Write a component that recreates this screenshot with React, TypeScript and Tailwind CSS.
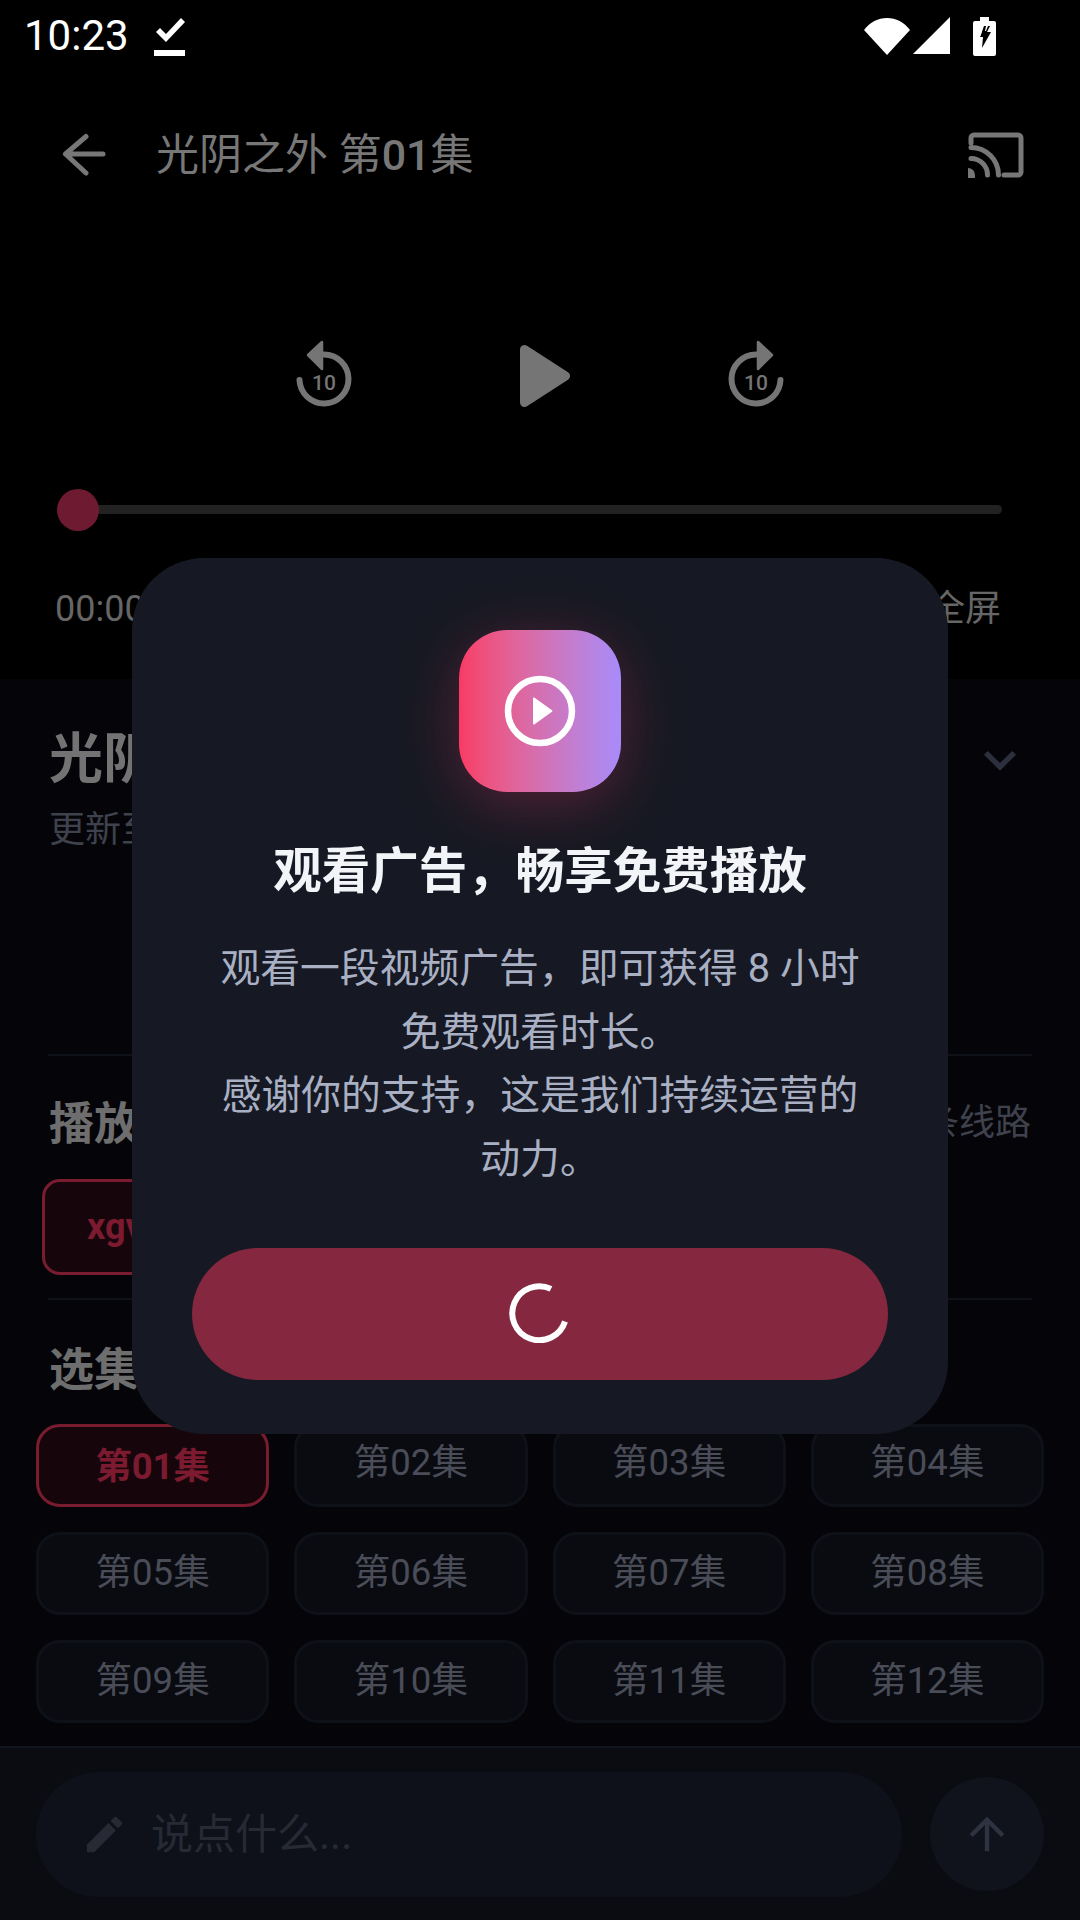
import { MdArrowUpward, MdEdit, MdKeyboardArrowDown } from "react-icons/md";

const episodes = ["第01集", "第02集", "第03集", "第04集", "第05集", "第06集", "第07集", "第08集", "第09集", "第10集", "第11集", "第12集"];

const StatusBar = () => (
  <div className="flex h-[72px] items-center pl-[24px] text-white">
    <span className="text-[42px] leading-[72px]">10:23</span>
    <svg className="ml-[25px]" width="32" height="40" viewBox="0 0 32 40" fill="white">
      <path d="M0 34h31v6H0zM2 16l4-4 6 6L27 2l4 4-19 20z" />
    </svg>
    <div className="flex-1" />
    <svg width="46" height="37" viewBox="0 0 46 37" fill="white">
      <path d="M0 12C6 4 14 0 23 0s17 4 23 12L23 37z" />
    </svg>
    <svg className="ml-[3px]" width="38" height="38" viewBox="0 0 38 38" fill="white">
      <path d="M37 0v37H0z" />
    </svg>
    <svg className="ml-[22px] mr-[84px]" width="23" height="39" viewBox="0 0 23 39">
      <path fill="white" d="M7 0h9v4h5a2 2 0 0 1 2 2v31a2 2 0 0 1-2 2H2a2 2 0 0 1-2-2V6a2 2 0 0 1 2-2h5z" />
      <path fill="black" d="M4 9h7l-4 11h3l-1 11 9-16h-4l3-6h1v0H4z" />
      <path fill="white" d="M6.500 12h3l-2 7H6.500zM13 9h2l-2 5h-1z" />
    </svg>
  </div>
);

const SeekIcon = ({ flip }: { flip?: boolean }) => (
  <svg width="56" height="68" viewBox="0 0 56 68" fill="none">
    <g transform={flip ? "translate(56 0) scale(-1 1)" : undefined}>
      <path d="M28 14.500A24.500 24.500 0 1 1 3.500 40" stroke="#757575" strokeWidth="6" strokeLinecap="round" />
      <path d="M26 2v27L12 15z" fill="#757575" stroke="#757575" strokeWidth="2.500" strokeLinejoin="round" />
    </g>
    <text x="28" y="50" textAnchor="middle" fontSize="21" fontWeight="500" fill="#757575">10</text>
  </svg>
);

const Episode = ({ label, active, firstRow }: { label: string; active: boolean; firstRow: boolean }) => {
  if (active) {
    return (
      <div className="flex h-[83px] items-center justify-center rounded-[24px] border-[3px] border-[#7a1c30] bg-[#16060c] pt-[4px] text-[36.500px] font-bold text-[#7c1a30]">
        {label}
      </div>
    );
  }
  return (
    <div
      className={
        firstRow
          ? "flex h-[83px] items-center justify-center rounded-[24px] border-[3px] border-[#0f1119] bg-[#090b10] pb-[5px] text-[36.500px] text-[#4a4d58]"
          : "flex h-[83px] items-center justify-center rounded-[24px] border-[3px] border-[#0f1119] bg-[#090b10] text-[36.500px] text-[#4a4d58]"
      }
    >
      {label}
    </div>
  );
};

const AdDialog = () => (
  <div className="absolute left-[132px] top-[558px] flex h-[876px] w-[816px] flex-col items-center rounded-[72px] bg-[#161923] px-[60px] pt-[72px]">
    <div className="flex h-[162px] w-[162px] items-center justify-center rounded-[48px] bg-gradient-to-r from-[#f83a64] to-[#a78bfa] shadow-[0_12px_60px_rgba(248,58,100,0.28)]">
      <svg width="72" height="72" viewBox="0 0 72 72" fill="none">
        <circle cx="36" cy="36" r="32" stroke="white" strokeWidth="6.500" />
        <path d="M29 23.500v25a1 1 0 0 0 1.600.8L48 36.800a1 1 0 0 0 0-1.600L30.600 22.700a1 1 0 0 0-1.600.8z" fill="white" />
      </svg>
    </div>
    <h2 className="mt-[50px] text-[48.500px] font-bold leading-[60px] text-[#f3f4f8]">观看广告，畅享免费播放</h2>
    <p className="mt-[35px] w-[664px] text-center text-[39.800px] leading-[63.500px] text-[#a9b0c4]">
      观看一段视频广告，即可获得 8 小时免费观看时长。
      <br />
      感谢你的支持，这是我们持续运营的动力。
    </p>
    <div className="mt-auto mb-[54px] flex h-[132px] w-[696px] items-center justify-center rounded-full bg-[#84273f]">
      <svg className="mb-[2px] ml-[-2px]" width="60" height="60" viewBox="0 0 60 60" fill="none">
        <path d="M42 5.900A27 27 0 1 0 56 38.500" stroke="white" strokeWidth="6" />
      </svg>
    </div>
  </div>
);

export default function App() {
  return (
    <div lang="zh-CN" className="relative flex h-[1920px] w-[1080px] flex-col overflow-hidden bg-black [font-family:Roboto,'Noto_Sans_CJK_SC',sans-serif]">
      <div className="h-[679px] shrink-0 bg-black">
        <StatusBar />
        <div className="flex h-[166px] items-center pl-[62px] pr-[56px] text-[#777777]">
          <svg className="shrink-0" width="46" height="46" viewBox="0 0 46 46" fill="none" stroke="#777777" strokeWidth="5" strokeLinecap="round" strokeLinejoin="round">
            <path d="M24 4.500 3.500 22 24 41M3.500 22H41" />
          </svg>
          <div className="ml-[48px] text-[43px] leading-[60px]">
            光阴之外 第<span className="font-medium">01</span>集
          </div>
          <div className="flex-1" />
          <svg width="56" height="46" viewBox="0 0 56 46" fill="none" stroke="#777777" strokeWidth="5" strokeLinecap="round">
            <path d="M3 11V6a3 3 0 0 1 3-3h44a3 3 0 0 1 3 3v34a3 3 0 0 1-3 3H36" />
            <path d="M3 15.500A27.500 27.500 0 0 1 30.500 43M3 26.500A16.500 16.500 0 0 1 19.500 43" />
            <path d="M0 36a7 7 0 0 1 7 7v3H0z" fill="#777777" stroke="none" />
          </svg>
        </div>
        <div className="flex h-[276px] items-center">
          <div className="mb-[4px] ml-[296px]">
            <SeekIcon />
          </div>
          <svg className="ml-[167px]" width="52" height="64" viewBox="0 0 52 64" fill="#757575">
            <path d="M1 5.500v53a4.500 4.500 0 0 0 7 3.800l41-26.500a4.500 4.500 0 0 0 0-7.600L8 1.700A4.500 4.500 0 0 0 1 5.500z" />
          </svg>
          <div className="mb-[4px] ml-[157px]">
            <SeekIcon flip />
          </div>
        </div>
        <div className="relative mx-[57px] mt-[-25px] h-[42px] w-[945px]">
          <div className="absolute left-0 right-0 top-[16px] h-[9px] rounded-full bg-[#222222]" />
          <div className="absolute left-0 top-0 h-[42px] w-[42px] rounded-full bg-[#6e1a30]" />
        </div>
        <div className="mt-[57px] flex h-[42px] items-center justify-between pl-[55px] pr-[79px] text-[36px] text-[#666666]">
          <span>00:00 / 00:00</span>
          <span>全屏</span>
        </div>
      </div>

      <div className="flex min-h-0 flex-1 flex-col bg-[#050509]">
        <div className="flex items-center justify-between pl-[49px] pr-[48px] pt-[49px]">
          <div className="text-[54px] font-bold leading-[64px] text-[#737373]">光阴之外</div>
          <MdKeyboardArrowDown size={64} className="text-[#2c2f3e]" />
        </div>
        <div className="pl-[49px] pt-[16px] text-[36px] leading-[44px] text-[#3f424d]">更新至第12集</div>

        <div className="mx-[48px] mt-[202px] h-[2px] bg-[#0f1118]" />
        <div className="flex items-center justify-between pl-[49px] pr-[49px] pt-[40px]">
          <div className="text-[45px] font-bold leading-[58px] text-[#6e6e6e]">播放线路</div>
          <div className="pb-[4px] text-[36px] leading-[50px] text-[#3f424d]">共 1 条线路</div>
        </div>
        <div className="pl-[42px] pt-[25px]">
          <div className="flex h-[96px] w-[300px] items-center rounded-[18px] border-[3px] border-[#7a1c30] bg-[#16060c] pl-[42px] text-[36px] font-bold text-[#7c1a30]">
            xgvod
          </div>
        </div>
        <div className="mx-[48px] mt-[23px] h-[2px] bg-[#0f1118]" />
        <div className="pl-[49px] pt-[42px] text-[45px] font-bold leading-[58px] text-[#6e6e6e]">选集</div>

        <div className="mt-[24px] grid grid-cols-4 gap-x-[25px] gap-y-[25px] pl-[36px] pr-[36px]">
          {episodes.map((label, i) => (
            <Episode key={label} label={label} active={i === 0} firstRow={i < 4} />
          ))}
        </div>

        <div className="mt-auto flex h-[174px] items-center border-t-2 border-[#10141e] bg-[#0a0c12] pl-[36px] pr-[36px]">
          <div className="flex h-[125px] w-[866px] items-center rounded-full bg-[#0e1119] pl-[45px] text-[#272a35]">
            <MdEdit size={47} className="shrink-0" />
            <span className="ml-[23px] text-[42px]">说点什么...</span>
          </div>
          <div className="ml-[28px] flex h-[114px] w-[114px] items-center justify-center rounded-full bg-[#10131c] text-[#2f3240]">
            <MdArrowUpward size={52} />
          </div>
        </div>
      </div>

      <AdDialog />
    </div>
  );
}
